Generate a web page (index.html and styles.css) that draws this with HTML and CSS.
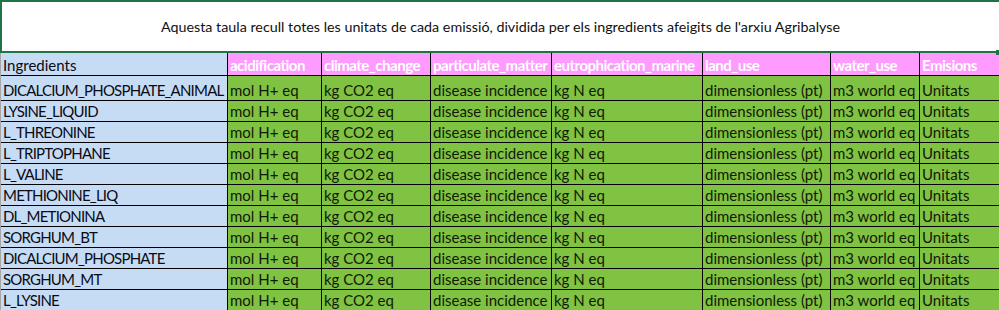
FILE: index.html
```html
<!DOCTYPE html>
<html lang="ca">
<head>
<meta charset="utf-8">
<title>Unitats d'emissió</title>
<link rel="stylesheet" href="styles.css">
</head>
<body>
<div class="sheet">
  <div class="title">
    <p class="title-text">Aquesta taula recull totes les unitats de cada emissió, dividida per els ingredients afeigits de l'arxiu Agribalyse</p>
    <span class="handle"></span>
  </div>
  <div class="grid">
    <div class="c ing">Ingredients</div>
    <div class="c hd">acidification</div>
    <div class="c hd">climate_change</div>
    <div class="c hd">particulate_matter</div>
    <div class="c hd">eutrophication_marine</div>
    <div class="c hd">land_use</div>
    <div class="c hd">water_use</div>
    <div class="c hd">Emisions</div>

    <div class="c ing caps">DICALCIUM_PHOSPHATE_ANIMAL</div>
    <div class="c gr">mol H+ eq</div><div class="c gr">kg CO2 eq</div><div class="c gr">disease incidence</div><div class="c gr">kg N eq</div><div class="c gr">dimensionless (pt)</div><div class="c gr">m3 world eq</div><div class="c gr">Unitats</div>

    <div class="c ing caps">LYSINE_LIQUID</div>
    <div class="c gr">mol H+ eq</div><div class="c gr">kg CO2 eq</div><div class="c gr">disease incidence</div><div class="c gr">kg N eq</div><div class="c gr">dimensionless (pt)</div><div class="c gr">m3 world eq</div><div class="c gr">Unitats</div>

    <div class="c ing caps">L_THREONINE</div>
    <div class="c gr">mol H+ eq</div><div class="c gr">kg CO2 eq</div><div class="c gr">disease incidence</div><div class="c gr">kg N eq</div><div class="c gr">dimensionless (pt)</div><div class="c gr">m3 world eq</div><div class="c gr">Unitats</div>

    <div class="c ing caps">L_TRIPTOPHANE</div>
    <div class="c gr">mol H+ eq</div><div class="c gr">kg CO2 eq</div><div class="c gr">disease incidence</div><div class="c gr">kg N eq</div><div class="c gr">dimensionless (pt)</div><div class="c gr">m3 world eq</div><div class="c gr">Unitats</div>

    <div class="c ing caps">L_VALINE</div>
    <div class="c gr">mol H+ eq</div><div class="c gr">kg CO2 eq</div><div class="c gr">disease incidence</div><div class="c gr">kg N eq</div><div class="c gr">dimensionless (pt)</div><div class="c gr">m3 world eq</div><div class="c gr">Unitats</div>

    <div class="c ing caps">METHIONINE_LIQ</div>
    <div class="c gr">mol H+ eq</div><div class="c gr">kg CO2 eq</div><div class="c gr">disease incidence</div><div class="c gr">kg N eq</div><div class="c gr">dimensionless (pt)</div><div class="c gr">m3 world eq</div><div class="c gr">Unitats</div>

    <div class="c ing caps">DL_METIONINA</div>
    <div class="c gr">mol H+ eq</div><div class="c gr">kg CO2 eq</div><div class="c gr">disease incidence</div><div class="c gr">kg N eq</div><div class="c gr">dimensionless (pt)</div><div class="c gr">m3 world eq</div><div class="c gr">Unitats</div>

    <div class="c ing caps">SORGHUM_BT</div>
    <div class="c gr">mol H+ eq</div><div class="c gr">kg CO2 eq</div><div class="c gr">disease incidence</div><div class="c gr">kg N eq</div><div class="c gr">dimensionless (pt)</div><div class="c gr">m3 world eq</div><div class="c gr">Unitats</div>

    <div class="c ing caps">DICALCIUM_PHOSPHATE</div>
    <div class="c gr">mol H+ eq</div><div class="c gr">kg CO2 eq</div><div class="c gr">disease incidence</div><div class="c gr">kg N eq</div><div class="c gr">dimensionless (pt)</div><div class="c gr">m3 world eq</div><div class="c gr">Unitats</div>

    <div class="c ing caps">SORGHUM_MT</div>
    <div class="c gr">mol H+ eq</div><div class="c gr">kg CO2 eq</div><div class="c gr">disease incidence</div><div class="c gr">kg N eq</div><div class="c gr">dimensionless (pt)</div><div class="c gr">m3 world eq</div><div class="c gr">Unitats</div>

    <div class="c ing caps">L_LYSINE</div>
    <div class="c gr">mol H+ eq</div><div class="c gr">kg CO2 eq</div><div class="c gr">disease incidence</div><div class="c gr">kg N eq</div><div class="c gr">dimensionless (pt)</div><div class="c gr">m3 world eq</div><div class="c gr">Unitats</div>
  </div>
</div>
</body>
</html>
```

FILE: styles.css
```css
html, body {
  margin: 0;
  padding: 0;
  background: #ffffff;
  overflow: hidden;
}

.sheet {
  width: 999px;
  font-family: Lato, "Liberation Sans", sans-serif;
  color: #111111;
}

.title {
  position: relative;
  box-sizing: border-box;
  height: 53px;
  border-top: 2px solid #217346;
  border-left: 2px solid #217346;
  display: flex;
  align-items: center;
  justify-content: center;
}

.title::after {
  content: "";
  position: absolute;
  left: -2px;
  bottom: 0;
  width: 998px;
  height: 2px;
  background: #217346;
}

.title-text {
  margin: 0;
  padding-bottom: 1px;
  font-size: 14.3px;
  line-height: 18px;
  color: #111111;
}

.handle {
  position: absolute;
  right: 0;
  bottom: -2px;
  width: 3px;
  height: 5px;
  background: #217346;
}

.grid {
  display: grid;
  grid-template-columns: 226px 93px 108px 120px 150px 127px 88px 1fr;
  grid-template-rows: 22px 24px repeat(10, 20px);
  gap: 1px;
  background: #000000;
  border-left: 1px solid #a6a6a6;
  border-bottom: 1px solid #000000;
}

.c {
  display: flex;
  align-items: flex-end;
  padding-left: 2px;
  font-size: 15px;
  line-height: 20px;
  white-space: nowrap;
  overflow: hidden;
}

.ing {
  background: #c6dcf5;
  color: #0a0a14;
}

.caps {
  letter-spacing: -0.8px;
}

.hd {
  background: #ff9bff;
  color: #ffffff;
  font-weight: 700;
  letter-spacing: -0.5px;
}

.gr {
  background: #80c242;
  color: #101a06;
}
```
